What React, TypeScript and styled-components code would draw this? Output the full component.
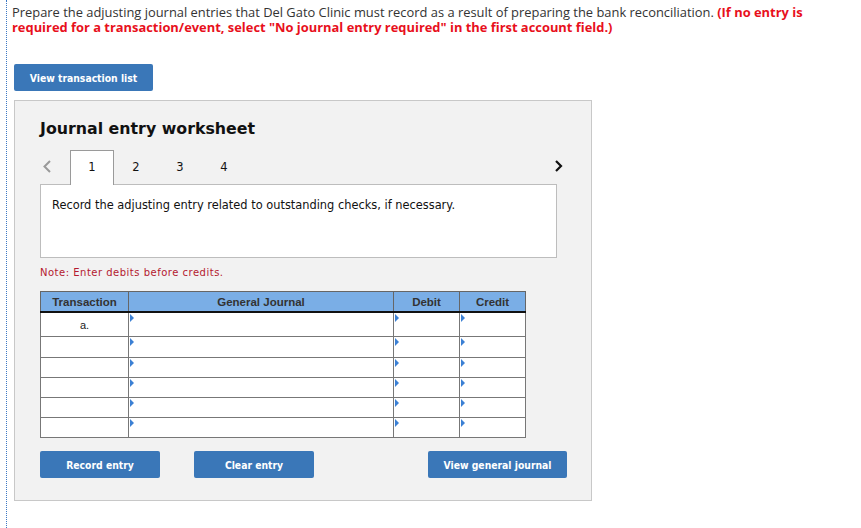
import React from "react";
import styled, { createGlobalStyle } from "styled-components";

const Global = createGlobalStyle`
  html, body { margin: 0; padding: 0; background: #fff; }
  body { font-family: "DejaVu Sans", Verdana, sans-serif; }
`;

const Page = styled.div`
  margin-left: 6px;
  min-height: 528px;
  border-left: 1px dotted #3b78c4;
  padding: 5px 0 0 5px;
  box-sizing: border-box;
`;

const Instructions = styled.p`
  margin: 0;
  font-family: "Open Sans", "Liberation Sans", sans-serif;
  font-size: 12.9px;
  line-height: 15px;
  color: #333;
  width: 800px;
`;

const Strong = styled.strong`
  color: #e8101c;
  font-weight: 700;
`;

const BlueButton = styled.button<{ $w: number }>`
  width: ${(p) => p.$w}px;
  height: 27px;
  border: none;
  border-radius: 2px;
  background: #3a77b8;
  color: #fff;
  font-family: "DejaVu Sans Condensed", "DejaVu Sans", Verdana, sans-serif;
  font-weight: 700;
  font-size: 10.3px;
  padding: 0;
  cursor: pointer;
`;

const TopBar = styled.div`
  margin: 29px 0 0 2px;
`;

const Panel = styled.section`
  margin: 9px 0 0 2px;
  width: 578px;
  height: 401px;
  box-sizing: border-box;
  background: #f2f2f2;
  border: 1px solid #c8c8c8;
  padding: 18px 0 0 25px;
  display: flex;
  flex-direction: column;
`;

const Title = styled.h2`
  margin: 0;
  font-family: "DejaVu Sans", Verdana, sans-serif;
  font-weight: 700;
  font-size: 15.8px;
  line-height: 20px;
  color: #111;
`;

const TabRow = styled.div`
  margin-top: 11px;
  width: 523px;
  height: 34px;
  display: flex;
  align-items: stretch;
`;

const Arrow = styled.span<{ $dim?: boolean; $end?: boolean }>`
  width: 30px;
  display: flex;
  align-items: center;
  justify-content: ${(p) => (p.$end ? "flex-end" : "flex-start")};
  padding: 0 0 2px ${(p) => (p.$end ? 0 : 2)}px;
  box-sizing: border-box;
  color: ${(p) => (p.$dim ? "#9a9a9a" : "#111")};
`;

const Tab = styled.div<{ $active?: boolean }>`
  width: 44px;
  box-sizing: border-box;
  display: flex;
  align-items: center;
  justify-content: center;
  padding-bottom: 2px;
  font-size: 11.5px;
  color: #111;
  background: ${(p) => (p.$active ? "#fff" : "transparent")};
  border: 1px solid ${(p) => (p.$active ? "#9a9a9a" : "transparent")};
  border-bottom: none;
  margin-bottom: -1px;
  position: relative;
  z-index: 1;
`;

const Spacer = styled.div`
  flex: 1;
`;

const ContentBox = styled.div`
  width: 517px;
  height: 74px;
  box-sizing: border-box;
  background: #fff;
  border: 1px solid #bdbdbd;
  padding: 13px 0 0 11px;
  font-size: 11.4px;
  color: #111;
`;

const Note = styled.div`
  margin-top: 9px;
  font-size: 10px;
  letter-spacing: 0.5px;
  color: #b4192f;
`;

const Table = styled.table`
  margin-top: 13px;
  border-collapse: collapse;
  width: 485px;
  table-layout: fixed;
  font-family: "Liberation Sans", Arial, sans-serif;
`;

const Th = styled.th`
  height: 19px;
  padding: 0;
  background: #7aaee6;
  border: 1px solid #666;
  border-bottom: 2px solid #111;
  font-size: 11.5px;
  font-weight: 700;
  color: #333;
`;

const Td = styled.td<{ $h: number }>`
  height: ${(p) => p.$h}px;
  padding: 0;
  background: #fff;
  border: 1px solid #777;
  font-size: 11px;
  color: #222;
  text-align: center;
  position: relative;
`;

const Col = styled.col<{ $w: number }>`
  width: ${(p) => p.$w}px;
`;

const Marker = styled.span`
  position: absolute;
  left: 1px;
  top: 1px;
  width: 0;
  height: 0;
  border-top: 4px solid transparent;
  border-bottom: 4px solid transparent;
  border-left: 4px solid #3b80d4;
`;

const ButtonRow = styled.div`
  margin-top: 13px;
  width: 527px;
  display: flex;
`;

const Gap = styled.div<{ $w: number }>`
  width: ${(p) => p.$w}px;
`;

const LeftChevron = () => (
  <svg width="10" height="13" viewBox="0 0 10 13">
    <path d="M8 1 L2.5 6.5 L8 12" fill="none" stroke="currentColor" strokeWidth="2" />
  </svg>
);

const RightChevron = () => (
  <svg width="9" height="12" viewBox="0 0 9 12">
    <path d="M2 1 L7 6 L2 11" fill="none" stroke="currentColor" strokeWidth="2.2" />
  </svg>
);

const heights = [23, 20, 19, 19, 19, 19];

export default function App() {
  return (
    <>
      <Global />
      <Page>
        <Instructions>
          Prepare the adjusting journal entries that Del Gato Clinic must record as a result of preparing the bank
          reconciliation.{" "}
          <Strong>
            (If no entry is required for a transaction/event, select "No journal entry required" in the first account
            field.)
          </Strong>
        </Instructions>
        <TopBar>
          <BlueButton $w={139}>View transaction list</BlueButton>
        </TopBar>
        <Panel>
          <Title>Journal entry worksheet</Title>
          <TabRow>
            <Arrow $dim>
              <LeftChevron />
            </Arrow>
            <Tab $active>1</Tab>
            <Tab>2</Tab>
            <Tab>3</Tab>
            <Tab>4</Tab>
            <Spacer />
            <Arrow $end>
              <RightChevron />
            </Arrow>
          </TabRow>
          <ContentBox>Record the adjusting entry related to outstanding checks, if necessary.</ContentBox>
          <Note>Note: Enter debits before credits.</Note>
          <Table>
            <colgroup>
              <Col $w={88} />
              <Col $w={265} />
              <Col $w={66} />
              <Col $w={66} />
            </colgroup>
            <thead>
              <tr>
                <Th>Transaction</Th>
                <Th>General Journal</Th>
                <Th>Debit</Th>
                <Th>Credit</Th>
              </tr>
            </thead>
            <tbody>
              {heights.map((h, i) => (
                <tr key={i}>
                  <Td $h={h}>{i === 0 ? "a." : ""}</Td>
                  <Td $h={h}>
                    <Marker />
                  </Td>
                  <Td $h={h}>
                    <Marker />
                  </Td>
                  <Td $h={h}>
                    <Marker />
                  </Td>
                </tr>
              ))}
            </tbody>
          </Table>
          <ButtonRow>
            <BlueButton $w={120}>Record entry</BlueButton>
            <Gap $w={34} />
            <BlueButton $w={120}>Clear entry</BlueButton>
            <Spacer />
            <BlueButton $w={139}>View general journal</BlueButton>
          </ButtonRow>
        </Panel>
      </Page>
    </>
  );
}
